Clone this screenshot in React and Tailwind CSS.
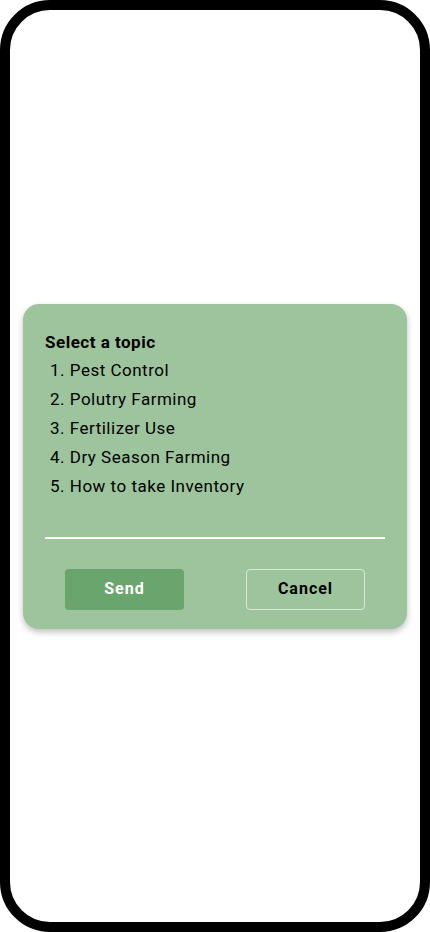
export default function App() {
  const topics = [
    "Pest Control",
    "Polutry Farming",
    "Fertilizer Use",
    "Dry Season Farming",
    "How to take Inventory",
  ];

  return (
    <div className="w-[430px] h-[932px] bg-white font-['Roboto',sans-serif]">
      {/* Phone frame */}
      <div className="h-full border-[10px] border-black rounded-[50px] flex flex-col justify-center px-[13px]">
        {/* Topic dialog */}
        <div className="bg-[#9dc49d] rounded-[16px] shadow-[0_3px_6px_rgba(0,0,0,0.25)] px-[22px] pt-[28px] pb-[19px]">
          <h2 className="text-[17px] leading-[20px] font-bold tracking-[0.5px] text-black">
            Select a topic
          </h2>
          <ol className="mt-[4px] pl-[5px]">
            {topics.map((t, i) => (
              <li key={i} className="text-[17px] leading-[29px] tracking-[0.5px] text-black">
                {i + 1}. {t}
              </li>
            ))}
          </ol>
          <div className="h-[2px] bg-white mt-[36px]" />
          <div className="flex justify-between px-5 mt-[30px]">
            <button className="w-[119px] h-[41px] rounded-[4px] bg-[#6aa56e] text-white text-[16px] font-bold tracking-[1px]">
              Send
            </button>
            <button className="w-[119px] h-[41px] rounded-[4px] border border-white/60 text-black text-[16px] font-bold tracking-[1px]">
              Cancel
            </button>
          </div>
        </div>
      </div>
    </div>
  );
}
